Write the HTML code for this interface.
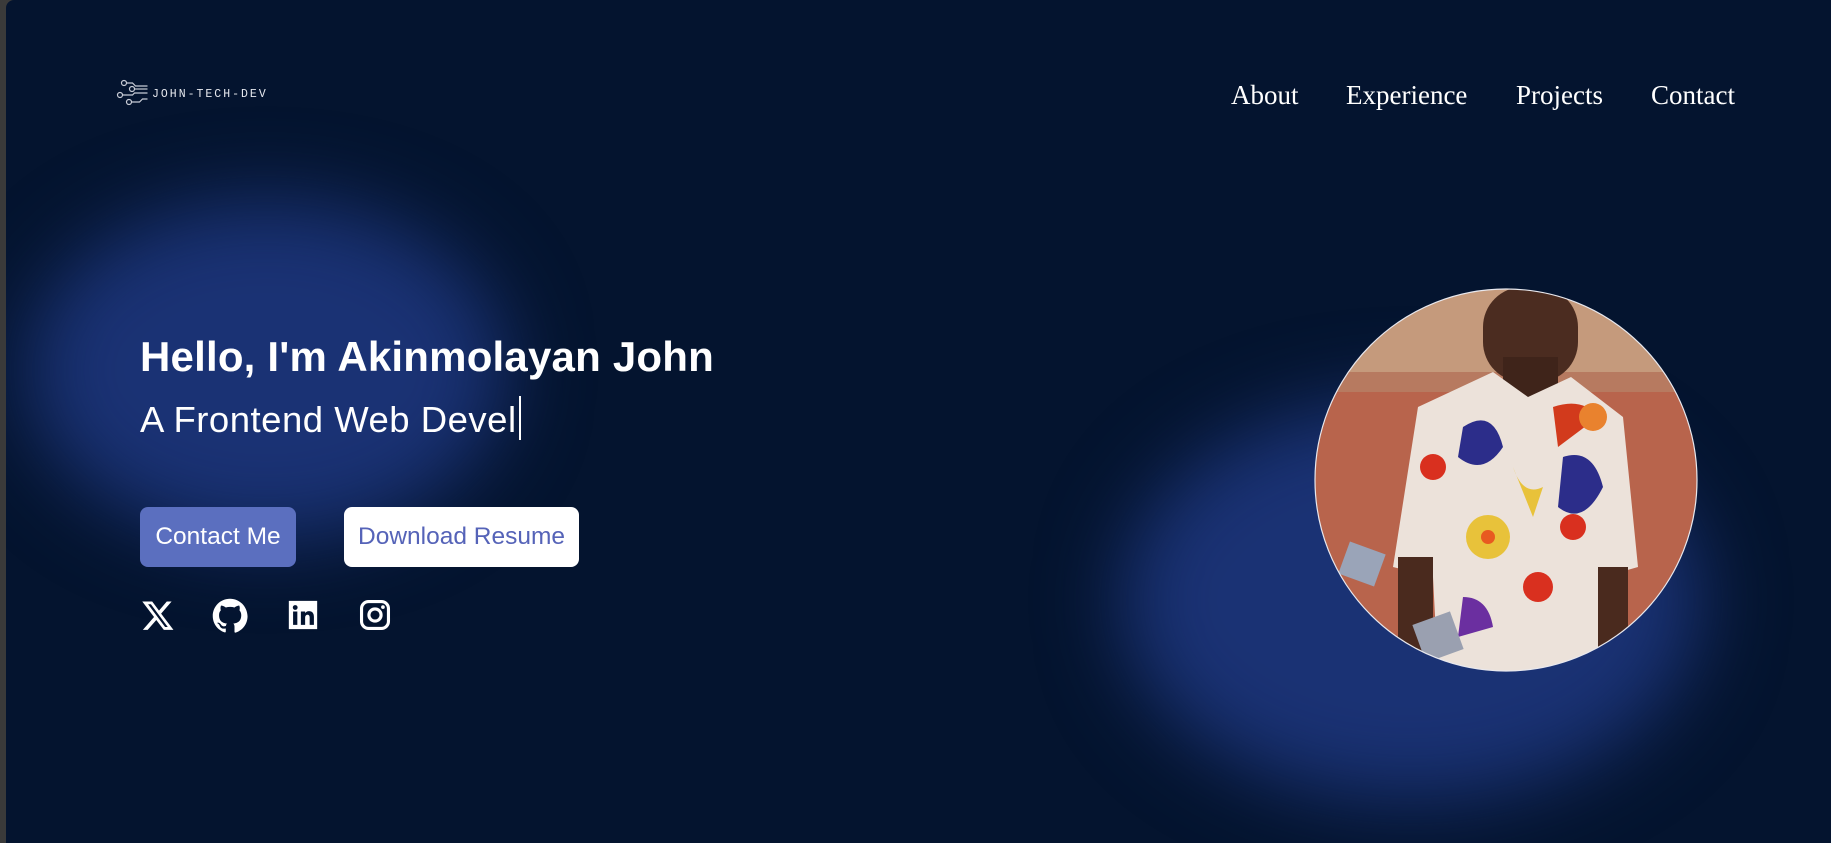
<!DOCTYPE html>
<html><head><meta charset="utf-8"><style>
html,body{margin:0;padding:0;width:1831px;height:843px;overflow:hidden;background:#3a3a3a}
.page{position:absolute;left:6px;top:0;width:1825px;height:843px;background:#04142f;border-top-left-radius:8px;overflow:hidden;font-family:"Liberation Sans",sans-serif}
.blob{position:absolute;border-radius:50%;background:#1a3274;filter:blur(40px)}
.nav a{position:absolute;top:80px;font-family:"Liberation Serif",serif;font-size:27px;color:#fff;text-decoration:none}
h1{position:absolute;left:134px;top:333px;margin:0;font-size:42px;font-weight:bold;color:#fff;letter-spacing:0.2px}
.sub{position:absolute;left:134px;top:396px;font-size:36.5px;color:#fff;font-weight:300;letter-spacing:0.5px}
.cur{display:inline-block;width:2px;height:44px;background:#fff;vertical-align:-8px;margin-left:2px}
.btn{position:absolute;top:507px;height:60px;border-radius:8px;font-size:24.5px;line-height:60px;text-align:center}
.ic{position:absolute;top:598px}
</style></head><body>
<div class="page">
<div class="blob" style="left:20px;top:200px;width:480px;height:340px"></div>
<div class="blob" style="left:1115px;top:400px;width:580px;height:400px"></div>

<svg style="position:absolute;left:110px;top:78px" width="170" height="30" viewBox="0 0 170 30">
<g stroke="#c8ccd6" stroke-width="1.2" fill="none">
<circle cx="8" cy="5" r="2.5"/><path d="M10.5 5h6l3 3h12"/>
<circle cx="16" cy="11" r="2.5"/><path d="M18.5 11h13"/>
<circle cx="4" cy="17" r="2.5"/><path d="M6.5 17h10l2-2h13"/>
<circle cx="13" cy="24" r="2.5"/><path d="M15.5 24h8l3-3h5"/>
</g>
<text x="36" y="19" fill="#e6e8ee" font-family="Liberation Mono,monospace" font-size="11.5" letter-spacing="2">JOHN-TECH-DEV</text>
</svg>

<div class="nav">
<a style="left:1225px">About</a><a style="left:1340px">Experience</a><a style="left:1510px">Projects</a><a style="left:1645px">Contact</a>
</div>

<h1>Hello, I'm Akinmolayan John</h1>
<div class="sub">A Frontend Web Devel<span class="cur"></span></div>

<div class="btn" style="left:134px;width:156px;background:#5b6fbf;color:#fff">Contact Me</div>
<div class="btn" style="left:338px;width:235px;background:#fff;color:#5563b8">Download Resume</div>

<svg class="ic" style="left:135px" width="34" height="34" viewBox="0 0 24 24"><path fill="#fff" d="M18.2 2.5h3.4l-7.4 8.5 8.7 11.5h-6.8l-5.3-7-6.1 7H1.3l7.9-9.1L.9 2.5h7l4.8 6.4zm-1.2 18h1.9L7 4.4H5z"/></svg>
<svg class="ic" style="left:206px" width="36" height="36" viewBox="0 0 24 24"><path fill="#fff" d="M12 .5C5.6.5.5 5.6.5 12c0 5.1 3.3 9.4 7.9 10.9.6.1.8-.2.8-.6v-2c-3.2.7-3.900-1.500-3.900-1.500-.5-1.300-1.300-1.700-1.300-1.700-1-.7.1-.7.1-.7 1.2.1 1.8 1.2 1.8 1.2 1 1.8 2.7 1.3 3.4 1 .1-.8.4-1.3.7-1.6-2.6-.3-5.3-1.3-5.3-5.7 0-1.3.5-2.3 1.2-3.1-.1-.3-.5-1.5.1-3.1 0 0 1-.3 3.2 1.2a11 11 0 0 1 5.8 0c2.2-1.5 3.2-1.2 3.2-1.2.6 1.6.2 2.8.1 3.1.7.8 1.2 1.9 1.2 3.1 0 4.4-2.7 5.4-5.3 5.7.4.4.8 1.1.8 2.2v3.3c0 .3.2.7.8.6 4.6-1.5 7.9-5.8 7.9-10.9C23.5 5.6 18.4.5 12 .5z"/></svg>
<svg class="ic" style="left:280px" width="34" height="34" viewBox="0 0 24 24"><path fill="#fff" d="M2 2h20v20H2zM5 9.5v9.5h3V9.5zM6.5 5a1.7 1.7 0 1 0 0 3.4 1.7 1.7 0 0 0 0-3.4zM10.5 9.5V19h3v-5c0-1.4.6-2.2 1.7-2.2s1.5.8 1.5 2.2v5h3v-5.7c0-2.7-1.4-4-3.4-4-1.4 0-2.3.7-2.8 1.4V9.5z"/></svg>
<svg class="ic" style="left:352px" width="34" height="34" viewBox="0 0 24 24"><g fill="none" stroke="#fff" stroke-width="2.2"><rect x="2.5" y="2.5" width="19" height="19" rx="5"/><circle cx="12" cy="12" r="4.3"/></g><circle cx="17.6" cy="6.4" r="1.3" fill="#fff"/></svg>

<svg style="position:absolute;left:1307px;top:287px" width="386" height="386" viewBox="0 0 386 386">
<defs><clipPath id="c"><circle cx="193" cy="193" r="191"/></clipPath></defs>
<g clip-path="url(#c)">
<rect width="386" height="386" fill="#b8644c"/>
<rect width="386" height="95" fill="#c59a7c"/>
<rect y="85" width="386" height="20" fill="#b77a60"/>
<rect x="170" y="0" width="95" height="95" rx="40" fill="#4b2c20"/>
<rect x="190" y="70" width="55" height="40" fill="#3f241a"/>
<path d="M105 120 L180 85 L215 110 L258 90 L310 130 L325 280 L290 290 L285 386 L125 386 L120 290 L80 280 Z" fill="#ece2da"/>
<rect x="85" y="270" width="35" height="116" fill="#4a2a1e"/>
<rect x="285" y="280" width="30" height="106" fill="#4a2a1e"/>
<circle cx="120" cy="180" r="13" fill="#d9301f"/><circle cx="175" cy="250" r="22" fill="#e8c23a"/><circle cx="175" cy="250" r="7" fill="#e85a20"/>
<path d="M150 140 q30 -20 40 20 q-20 30 -45 10z" fill="#2c2d8a"/>
<path d="M250 170 q30 -10 40 30 q-20 40 -45 20z" fill="#2c2d8a"/>
<path d="M240 120 q30 -10 45 10 l-40 30z" fill="#d23a1c"/>
<circle cx="280" cy="130" r="14" fill="#e9822e"/>
<circle cx="225" cy="300" r="15" fill="#d9301f"/>
<path d="M150 310 q25 0 30 30 l-35 10z" fill="#6b2fa0"/>
<rect x="105" y="330" width="40" height="40" fill="#9aa0b0" transform="rotate(-20 125 350)"/>
<rect x="30" y="260" width="38" height="34" fill="#9aa4b8" transform="rotate(20 49 277)"/>
<circle cx="260" cy="240" r="13" fill="#d9301f"/>
<path d="M200 180 q10 30 30 20 l-10 30z" fill="#e8c23a"/>
</g>
<circle cx="193" cy="193" r="191" fill="none" stroke="#e8e8ee" stroke-width="1.2"/>
</svg>
</div>
</body></html>
